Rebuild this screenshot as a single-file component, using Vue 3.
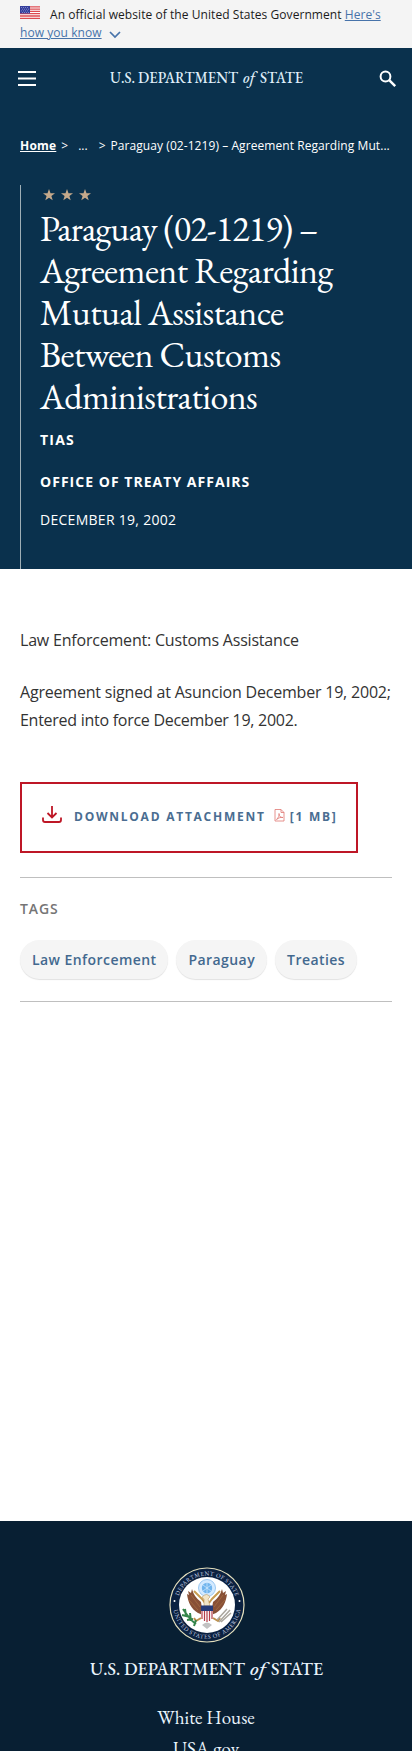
<script setup>
const titleLines = [
  'Paraguay (02-1219) –',
  'Agreement Regarding',
  'Mutual Assistance',
  'Between Customs',
  'Administrations',
]
const tags = ['Law Enforcement', 'Paraguay', 'Treaties']
const star = 'M6 0l1.5 4.2 4.5.1-3.6 2.7 1.3 4.3L6 8.7l-3.7 2.6L3.600 7 0 4.300l4.500-.1z'
</script>

<template>
  <div class="page">
    <div class="banner">
      <svg class="flag" width="20" height="13" viewBox="0 0 20 13">
        <rect width="20" height="13" fill="#fff" />
        <path d="M0 .8h20M0 3.100h20M0 5.400h20M0 7.700h20M0 10h20M0 12.300h20" stroke="#dc4a50" stroke-width="1.300" />
        <rect width="10" height="7.500" fill="#343d9b" />
        <path d="M1 1.500h8M2 3.200h7M1 4.900h8M2 6.500h7" stroke="#9aa5dc" stroke-width=".7" stroke-dasharray="1 1" />
      </svg>
      <span class="official">An official website of the United States Government </span>
      <a>Here's<br>how you know</a>
      <svg class="chevron" width="12" height="8" viewBox="0 0 12 8"><path d="M1 1l5 5 5-5" fill="none" stroke="#4773aa" stroke-width="1.700" /></svg>
    </div>

    <header class="bar">
      <svg class="menu" width="18" height="15" viewBox="0 0 18 15"><path d="M0 1h18M0 7.500h18M0 14h18" stroke="#fff" stroke-width="2" /></svg>
      <svg class="wordmark" width="196" height="24" viewBox="0 0 196 24">
        <g class="serif" fill="#dfedf8" font-size="15.500">
          <text x="1" y="16" textLength="128" lengthAdjust="spacingAndGlyphs">U.S. DEPARTMENT</text>
          <text x="134" y="16" font-style="italic" textLength="12" lengthAdjust="spacingAndGlyphs">of</text>
          <text x="151" y="16" textLength="43" lengthAdjust="spacingAndGlyphs">STATE</text>
        </g>
      </svg>
      <svg class="search" width="18" height="18" viewBox="0 0 18 18"><circle cx="6.500" cy="6.500" r="4.900" fill="none" stroke="#fff" stroke-width="2" /><path d="M10.200 10.200l6 6" stroke="#fff" stroke-width="2.500" /></svg>
    </header>

    <section class="hero">
      <nav class="crumbs"><a>Home</a><span class="gt">&gt;</span><span class="dots">...</span><span class="gt2">&gt;</span><span class="here">Paraguay (02-1219) – Agreement Regarding Mut...</span></nav>
      <div class="heading">
        <div class="stars">
          <svg v-for="n in 3" :key="n" width="12" height="12" viewBox="0 0 12 12"><path :d="star" fill="#c5a98b" /></svg>
        </div>
        <h1 class="serif"><span v-for="l in titleLines" :key="l">{{ l }}</span></h1>
        <p class="kind">TIAS</p>
        <p class="office">OFFICE OF TREATY AFFAIRS</p>
        <p class="date">DECEMBER 19, 2002</p>
      </div>
    </section>

    <main>
      <p class="para">Law Enforcement: Customs Assistance</p>
      <p class="para second">Agreement signed at Asuncion December 19, 2002;<br><span class="force">Entered into force December 19, 2002.</span></p>
      <a class="download">
        <svg class="dl" width="20" height="18" viewBox="0 0 20 18"><path d="M10 0v11M5.500 7l4.500 4.500L14.500 7M1 11.500v2.500q0 2 2 2h14q2 0 2-2v-2.500" fill="none" stroke="#be1726" stroke-width="1.800" /></svg>
        <span class="label">DOWNLOAD ATTACHMENT</span>
        <svg class="pdf" width="11" height="13" viewBox="0 0 11 13"><path d="M1 .5h6l3 3v8.500H1zM7 .5v3h3M2.500 10.500c2-2 3-4 2.500-6 0 3 1.500 4 4 4-3-.5-4 .5-6.500 2" fill="none" stroke="#df7772" stroke-width=".8" /></svg>
        <span class="size">[1 MB]</span>
      </a>
      <section class="tags">
        <h2>TAGS</h2>
        <div class="pills"><a v-for="t in tags" :key="t">{{ t }}</a></div>
      </section>
    </main>

    <footer>
      <svg class="seal" width="76" height="76" viewBox="0 0 76 76">
        <defs>
          <path id="arcTop" d="M8.500 38a29.500 29.500 0 0 1 59 0" />
          <path id="arcBottom" d="M4.300 38a33.700 33.700 0 0 0 67.400 0" />
        </defs>
        <circle cx="38" cy="38" r="37" fill="#0b2140" stroke="#e4dfbd" stroke-width="1.200" />
        <circle cx="38" cy="38" r="28" fill="#fff" />
        <g class="serif" fill="#d3dced" font-size="6">
          <text><textPath href="#arcTop" startOffset="9" textLength="75">DEPARTMENT OF STATE</textPath></text>
          <text><textPath href="#arcBottom" startOffset="5" textLength="96">UNITED STATES OF AMERICA</textPath></text>
        </g>
        <circle cx="5.500" cy="34" r="1" fill="#fff" /><circle cx="70.500" cy="34" r="1" fill="#fff" />
        <circle cx="38" cy="21" r="8.500" fill="#d4eaff" stroke="#88bdee" stroke-width=".8" />
        <circle cx="38" cy="21" r="5.200" fill="#70b4ed" /><path d="M34 18l8 6M42 18l-8 6M38 16v10" stroke="#d6edff" stroke-width=".7" />
        <path d="M32 35Q25 30 23 22l-1 4-3-2 1 4-2-1c1 8 4 15 11 19l5 2zM44 35Q51 30 53 22l1 4 3-2-1 4 2-1c-1 8-4 15-11 19l-5 2z" fill="#885036" />
        <path d="M22 28l9 12M20 33l9 10M54 28l-9 12M56 33l-9 10" stroke="#a56c40" stroke-width=".8" />
        <path d="M25 24l8 8 3 4M51 24l-8 8-3 4" fill="none" stroke="#c89c51" stroke-width="2" />
        <path d="M35 39v-7l-2-2q5-5 8 0l-2 2 2 7z" fill="#f2e5c8" stroke="#b38b4d" stroke-width=".5" />
        <path d="M32 39h12v12q-3 3-6 4-3-1-6-4z" fill="#fff" />
        <path d="M33 43v9M35.500 43v11M38 43v12M40.500 43v11M43 43v9" stroke="#b43d48" stroke-width="1.200" />
        <path d="M32 38.500h12V44H32z" fill="#263b78" />
        <path d="M32 51l-5 3-2-3M44 51l5 3 2-3" fill="none" stroke="#bd904b" stroke-width="2" />
        <path d="M14 42q7 11 13 15M16 42l1 7M13 48l8 2M18 53l6-1M21 46l1 8M25 59l2-6" fill="none" stroke="#35854b" stroke-width="2" />
        <path d="M50 55l11-12M48 53l10-11M52 55l10-9" stroke="#aaa69e" stroke-width="1.500" />
        <path d="M33 58q5-5 10 0l-5 4z" fill="#c2c2c2" />
      </svg>
      <svg class="brand" width="236" height="30" viewBox="0 0 236 30">
        <g class="serif" fill="#e8f3fb" font-size="18.700">
          <text x="1" y="21" textLength="155" lengthAdjust="spacingAndGlyphs">U.S. DEPARTMENT</text>
          <text x="161" y="21" font-style="italic" textLength="16" lengthAdjust="spacingAndGlyphs">of</text>
          <text x="182" y="21" textLength="52" lengthAdjust="spacingAndGlyphs">STATE</text>
        </g>
      </svg>
      <a class="house">White House</a>
      <a class="usa">USA.gov</a>
    </footer>
  </div>
</template>

<style>
body { margin: 0; background: #fff; }
</style>
<style scoped>
* { box-sizing: border-box; }
.page { width: 412px; height: 1751px; overflow: hidden; font-family: "Open Sans", sans-serif; display: flex; flex-direction: column; }
.serif { font-family: "EB Garamond", "Liberation Serif", serif; }
svg { display: block; flex: none; overflow: visible; }
p, h1, h2 { margin: 0; }
.banner { height: 48px; flex: none; background: #f4f4f4; padding: 6px 20px 0; font-size: 12px; line-height: 18px; color: #1b1b1b; letter-spacing: .06px; white-space: nowrap; }
.flag { display: inline-block; vertical-align: 0; margin-right: 10px; }
.banner a { color: #4773aa; text-decoration: underline; }
.chevron { display: inline-block; margin-left: 7px; vertical-align: -2px; }
.bar { height: 60px; flex: none; background: #0a314d; display: flex; align-items: flex-start; padding: 22px 15px 0 18px; }
.menu { margin-top: 1px; }
.wordmark { margin: -3px 0 0 73px; font-weight: 500; }
.search { margin-left: auto; }
.hero { height: 461px; flex: none; background: #0a314d; padding: 28px 20px 0; color: #fff; }
.crumbs { height: 20px; font-size: 12px; line-height: 20px; display: flex; white-space: nowrap; }
.crumbs a { font-weight: 700; text-decoration: underline; letter-spacing: .2px; }
.gt { margin-left: 5px; }
.dots { margin-left: 10px; }
.gt2 { margin-left: 11px; }
.here { margin-left: 5px; letter-spacing: .07px; }
.heading { margin-top: 29px; height: 384px; border-left: 1px solid #9fafb6; padding-left: 19px; display: flex; flex-direction: column; }
.stars { display: flex; gap: 6px; padding: 4px 0 0 3px; height: 23px; }
h1 { height: 210px; font-size: 36px; line-height: 42px; font-weight: 400; letter-spacing: -.57px; white-space: nowrap; }
h1 span { display: block; }
h1 span:first-child { letter-spacing: -.8px; }
.kind, .office { font-size: 14px; line-height: 20px; font-weight: 700; letter-spacing: 1.2px; }
.kind { margin-top: 12px; }
.office { margin-top: 22px; letter-spacing: 1.03px; }
.date { font-size: 14px; line-height: 20px; margin-top: 18px; letter-spacing: .28px; }
main { height: 952px; flex: none; padding: 57px 20px 0; }
.para { font-size: 16px; line-height: 28px; color: #333; letter-spacing: -0.2px; }
.second { margin-top: 24px; }
.force { letter-spacing: -.27px; }
.download { margin-top: 48px; width: 338px; height: 71px; border: 2px solid #be1726; display: flex; padding: 21px 0 0 20px; color: #4a6d91; font-weight: 700; font-size: 12px; line-height: 24px; letter-spacing: 1.75px; white-space: nowrap; }
.dl { margin-top: 1px; }
.label { margin-left: 12px; }
.pdf { margin: 4px 0 0 8px; }
.size { margin-left: 5px; }
.tags { margin-top: 24px; border-top: 1px solid #bfbfbf; border-bottom: 1px solid #bfbfbf; height: 125px; padding-top: 21px; }
h2 { font-size: 14px; line-height: 20px; font-weight: 600; color: #757575; letter-spacing: .9px; }
.pills { display: flex; gap: 8px; margin-top: 21px; }
.pills a { height: 39px; border-radius: 20px; padding: 0 12px; background: #f5f5f5; box-shadow: 0 1px 1px #e2e2e2; color: #43698f; font-size: 14px; line-height: 39px; font-weight: 600; letter-spacing: .43px; }
footer { height: 230px; flex: none; background: #081f33; display: flex; flex-direction: column; align-items: center; color: #e8f3fb; font: 19px/30px "EB Garamond", "Liberation Serif", serif; overflow: hidden; }
.seal { margin: 46px 0 0 2px; }
.brand { margin: 11px 0 0 2px; font-weight: 500; }
.house { margin-top: 19px; }
.usa { margin-top: 1px; }
</style>
